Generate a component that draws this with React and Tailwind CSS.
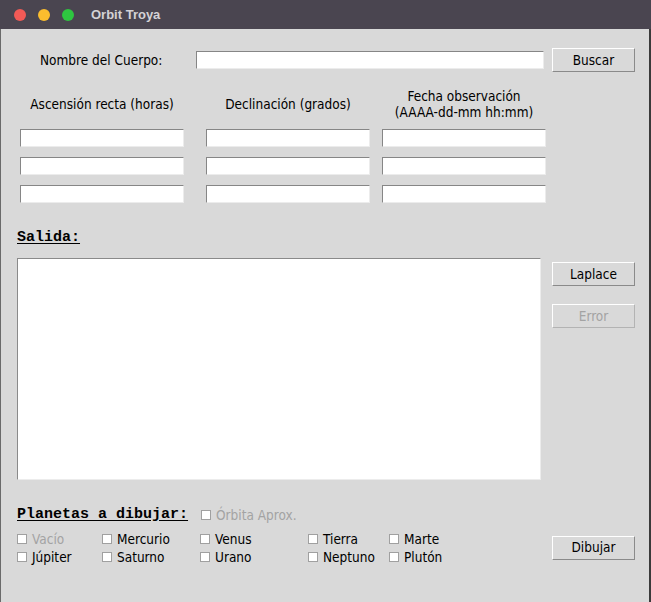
import React from 'react';

const sans = "font-['DejaVu_Sans_Condensed','Liberation_Sans',sans-serif]";

const Entry = ({ w }) => (
  <div className={`${w} h-[18px] bg-white border-t border-l border-t-[#868686] border-l-[#868686] border-b border-r border-b-[#ececec] border-r-[#ececec]`} />
);

const Btn = ({ children, disabled }) => (
  <div
    className={
      disabled
        ? 'w-[83px] h-[24px] flex items-center justify-center border border-t-white border-l-white border-b-[#b3b3b3] border-r-[#b3b3b3] text-[#a3a3a3]'
        : 'w-[83px] h-[24px] flex items-center justify-center border border-t-white border-l-white border-b-[#8a8a8a] border-r-[#8a8a8a] text-black'
    }
  >
    {children}
  </div>
);

const Check = ({ label, disabled, w }) => (
  <div className={`flex items-center h-[18px] ${w}`}>
    <span className="w-[10px] h-[10px] bg-white border border-[#a0a0a0] shrink-0" />
    <span className={disabled ? 'ml-[5px] text-[#a3a3a3]' : 'ml-[5px] text-black'}>{label}</span>
  </div>
);

const rows = [
  ['Vacío', 'Mercurio', 'Venus', 'Tierra', 'Marte'],
  ['Júpiter', 'Saturno', 'Urano', 'Neptuno', 'Plutón'],
];
const colW = ['w-[85px]', 'w-[98px]', 'w-[108px]', 'w-[81px]', 'w-[70px]'];

export default function App() {
  return (
    <div className={`w-[651px] h-[602px] flex flex-col bg-[#d9d9d9] text-[13.5px] ${sans}`}>
      {/* title bar */}
      <div className="h-[29px] shrink-0 bg-[#4a4550] flex items-center pl-[14px]">
        <span className="w-[12px] h-[12px] rounded-full bg-[#f25a56]" />
        <span className="w-[12px] h-[12px] rounded-full bg-[#fbbd2e] ml-[12px]" />
        <span className="w-[12px] h-[12px] rounded-full bg-[#2ec640] ml-[12px]" />
        <span className="ml-[17px] font-bold text-[13px] text-[#d4d2d6] font-['Liberation_Sans',sans-serif]">Orbit Troya</span>
      </div>

      <div className="flex-1 flex flex-col border-l border-l-[#6a6a6a] border-r-2 border-r-[#3a3a3a]">
        {/* search row */}
        <div className="mt-[19px] h-[24px] flex items-center">
          <span className="ml-[39px] w-[156px]">Nombre del Cuerpo:</span>
          <Entry w="w-[348px]" />
          <div className="ml-[8px]"><Btn>Buscar</Btn></div>
        </div>

        {/* headers */}
        <div className="mt-[16px] h-[32px] flex items-center ml-[19px] gap-[22px]">
          <div className="w-[164px] text-center">Ascensión recta (horas)</div>
          <div className="w-[164px] text-center">Declinación (grados)</div>
          <div className="w-[164px] -ml-[10px] text-center leading-[16px]">
            Fecha observación<br />(AAAA-dd-mm hh:mm)
          </div>
        </div>

        {/* entries */}
        <div className="mt-[9px] flex flex-col gap-[10px] ml-[19px]">
          {[0, 1, 2].map(i => (
            <div key={i} className="flex">
              <Entry w="w-[164px]" />
              <div className="ml-[22px]"><Entry w="w-[164px]" /></div>
              <div className="ml-[12px]"><Entry w="w-[164px]" /></div>
            </div>
          ))}
        </div>

        {/* output */}
        <div className="mt-[26px] ml-[16px] h-[18px] leading-[18px] font-['Liberation_Mono',monospace] font-bold text-[15px] underline underline-offset-2">Salida:</div>
        <div className="mt-[11px] ml-[16px] flex">
          <div className="w-[524px] h-[222px] bg-white border-t border-l border-t-[#8a8a8a] border-l-[#8a8a8a] border-b border-r border-b-[#ececec] border-r-[#ececec]" />
          <div className="ml-[11px] mt-[4px] flex flex-col gap-[18px]">
            <Btn>Laplace</Btn>
            <Btn disabled>Error</Btn>
          </div>
        </div>

        {/* planets */}
        <div className="mt-[26px] ml-[16px] h-[18px] flex items-center">
          <span className="font-['Liberation_Mono',monospace] font-bold text-[15px] leading-[18px] underline underline-offset-2">Planetas a dibujar:</span>
          <div className="ml-[13px]"><Check label="Órbita Aprox." disabled w="w-[120px]" /></div>
        </div>
        <div className="mt-[5px] ml-[16px] flex items-center">
          <div className="flex flex-col w-[535px] pt-[1px]">
            {rows.map((r, ri) => (
              <div key={ri} className="flex">
                {r.map((p, i) => (
                  <Check key={p} label={p} w={colW[i]} disabled={p === 'Vacío'} />
                ))}
              </div>
            ))}
          </div>
          <Btn>Dibujar</Btn>
        </div>
      </div>
    </div>
  );
}
